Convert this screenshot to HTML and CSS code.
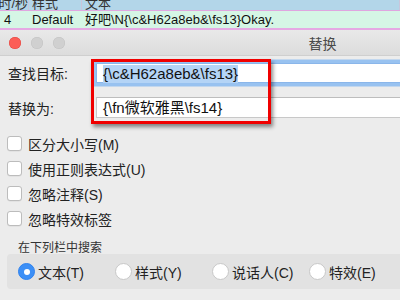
FILE: index.html
```html
<!DOCTYPE html>
<html lang="zh">
<head>
<meta charset="utf-8">
<link rel="stylesheet" href="styles.css">
</head>
<body>
<div class="table">
  <div class="thead">
    <div class="c c1"><span class="ht">时/秒</span></div>
    <div class="c c2"><span class="ht">样式</span></div>
    <div class="c c3"><span class="ht">文本</span></div>
  </div>
  <div class="trow">
    <div class="c c1">4</div>
    <div class="c c2">Default</div>
    <div class="c c3">好吧\N{\c&amp;H62a8eb&amp;\fs13}Okay.</div>
  </div>
</div>
<div class="window">
  <div class="titlebar">
    <div class="lights">
      <span class="light red"></span>
      <span class="light"></span>
      <span class="light"></span>
    </div>
    <div class="title">替换</div>
  </div>
  <div class="content">
    <div class="field-row">
      <label class="flabel">查找目标:</label>
      <div class="field focused"><span class="sel">{\c&amp;H62a8eb&amp;\fs13}</span></div>
    </div>
    <div class="field-row second">
      <label class="flabel">替换为:</label>
      <div class="field">{\fn微软雅黑\fs14}</div>
    </div>
    <div class="checks">
      <div class="check"><span class="box"></span>区分大小写(M)</div>
      <div class="check"><span class="box"></span>使用正则表达式(U)</div>
      <div class="check"><span class="box"></span>忽略注释(S)</div>
      <div class="check"><span class="box"></span>忽略特效标签</div>
    </div>
    <div class="glabel">在下列栏中搜索</div>
    <div class="group">
      <div class="radio"><span class="dot on"></span>文本(T)</div>
      <div class="radio"><span class="dot"></span>样式(Y)</div>
      <div class="radio"><span class="dot"></span>说话人(C)</div>
      <div class="radio"><span class="dot"></span>特效(E)</div>
    </div>
  </div>
  <div class="annot"></div>
</div>
</body>
</html>
```
FILE: styles.css
```css
html, body {
  margin: 0;
  padding: 0;
  width: 400px;
  height: 300px;
  overflow: hidden;
  background: #ececec;
  font-family: "Liberation Sans", "Noto Sans CJK SC", sans-serif;
  color: #222;
}
.table {
  width: 400px;
  font-size: 13px;
}
.thead, .trow {
  display: flex;
}
.thead {
  height: 10px;
  background: #b3d6e9;
  border-bottom: 1px solid #e0a6e0;
  overflow: hidden;
}
.thead .c {
  border-right: 1px solid #c9c6dc;
  display: flex;
  align-items: flex-end;
  color: #333;
  overflow: hidden;
}
.thead .ht {
  line-height: 16px;
  margin-bottom: -2px;
  white-space: nowrap;
}
.thead .c1 { justify-content: flex-end; }
.c1 { width: 28px; flex-shrink: 0; }
.c2 { width: 49px; padding-left: 3px; flex-shrink: 0; }
.c3 { flex: 1; padding-left: 3px; white-space: nowrap; }
.trow {
  height: 17px;
  line-height: 17px;
  background: #d5f6e5;
  border-bottom: 2px solid #e5a9e3;
  color: #111;
}
.trow .c1 { padding-left: 4px; width: 26px; }
.trow .c2 { width: 50px; padding-left: 2px; }
.window {
  position: relative;
  width: 640px;
  height: 270px;
  background: #ececec;
}
.titlebar {
  height: 25px;
  background: linear-gradient(#e9e9e9, #dcdcdc);
  border-bottom: 1px solid #cfcfcf;
  display: flex;
  align-items: center;
}
.lights {
  display: flex;
  gap: 10px;
  padding-left: 9px;
}
.light {
  width: 12px;
  height: 12px;
  border-radius: 50%;
  background: #d0d0d0;
  box-shadow: inset 0 0 0 0.5px #c2c2c2;
}
.light.red {
  background: #fc5e57;
  box-shadow: inset 0 0 0 0.5px #e14640;
}
.title {
  flex: 1;
  text-align: center;
  font-size: 14px;
  color: #4a4a4a;
  padding-right: 60px;
}
.content {
  padding: 7px 0 0 0;
}
.field-row {
  display: flex;
  align-items: center;
  height: 20px;
}
.field-row.second {
  margin-top: 14px;
  height: 21px;
}
.flabel {
  width: 88px;
  padding-left: 8px;
  font-size: 14px;
  color: #222;
}
.field {
  flex: 1;
  height: 100%;
  box-sizing: border-box;
  background: #fff;
  border: 1px solid #c8c8c8;
  border-top-color: #bdbdbd;
  font-size: 15px;
  line-height: 19px;
  padding-left: 6px;
  color: #111;
  white-space: nowrap;
}
.field.focused {
  border-color: #8ab6ea;
  box-shadow: 0 0 0 3.5px #98c2f0;
}
.sel {
  background: #b4d4f6;
  display: inline-block;
  line-height: 18px;
}
.checks {
  margin-top: 13px;
  padding-left: 7px;
}
.check {
  height: 25px;
  display: flex;
  align-items: center;
  font-size: 14px;
  color: #222;
}
.box {
  width: 13px;
  height: 13px;
  background: #fff;
  border: 1px solid #bcbcbc;
  border-radius: 3px;
  margin-right: 6px;
  box-shadow: 0 0.5px 0.5px rgba(0,0,0,0.08);
}
.glabel {
  margin-top: 10px;
  padding-left: 18px;
  font-size: 12px;
  line-height: 14px;
  color: #333;
}
.group {
  margin: -1px 0 0 7px;
  height: 35px;
  background: #e2e2e2;
  border-radius: 4px 0 0 4px;
  display: flex;
  align-items: center;
  padding-left: 11px;
}
.radio {
  width: 97px;
  display: flex;
  align-items: center;
  font-size: 14px;
  color: #222;
}
.dot {
  width: 17px;
  height: 17px;
  border-radius: 50%;
  background: #fff;
  box-sizing: border-box;
  border: 1px solid #c8c8c8;
  margin-right: 3px;
  position: relative;
}
.dot.on {
  background: #3c8ff6;
  border-color: #2f82ee;
}
.dot.on::after {
  content: "";
  position: absolute;
  left: 4.5px;
  top: 4.5px;
  width: 6px;
  height: 6px;
  border-radius: 50%;
  background: #fff;
}
.annot {
  position: absolute;
  left: 91px;
  top: 29px;
  width: 174px;
  height: 59px;
  border: 3.5px solid #f00000;
  box-shadow: 2px 3px 4px rgba(0,0,0,0.45);
}
```
